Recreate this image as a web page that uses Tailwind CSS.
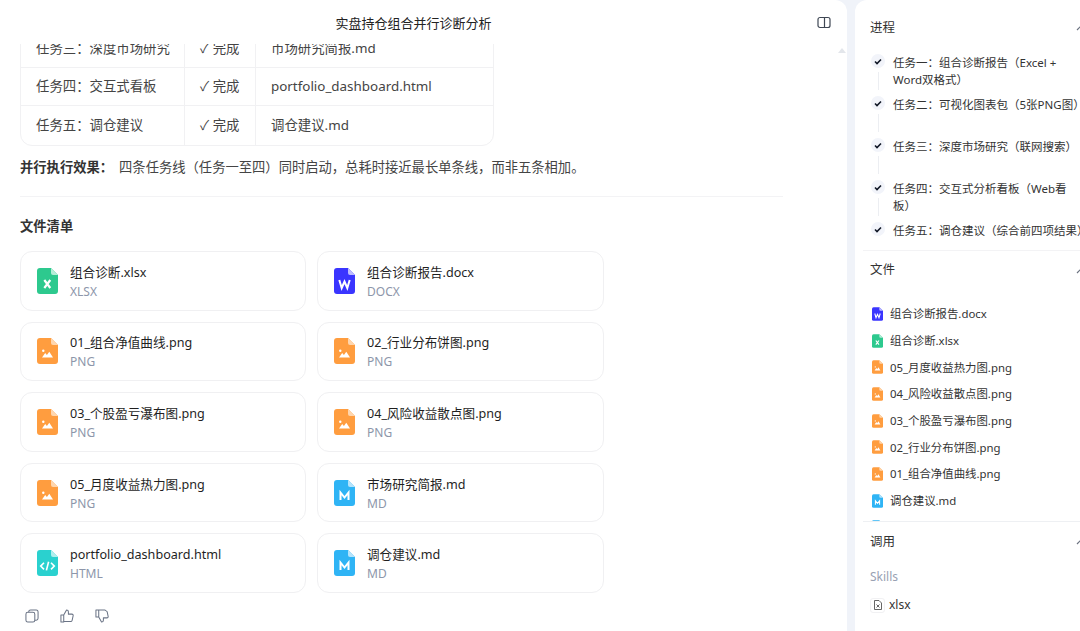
<!DOCTYPE html>
<html lang="zh-CN">
<head>
  <meta charset="UTF-8">
  <title>实盘持仓组合并行诊断分析</title>
  <script src="https://cdn.jsdelivr.net/npm/@tailwindcss/browser@4"></script>
</head>
<body class="bg-[#f0f3f9] h-[631px] w-[1080px] overflow-hidden font-['Noto_Sans','Noto_Sans_CJK_SC',sans-serif] text-[#333]">

  <!-- shared file icons -->
  <svg class="hidden">
    <symbol id="ic-xlsx" viewBox="0 0 21 26">
      <path fill="#2dc98e" d="M3 0H14L21 7V23a3 3 0 0 1-3 3H3a3 3 0 0 1-3-3V3a3 3 0 0 1 3-3z"/>
      <path fill="#b5eed8" d="M14 0L21 7H16a2 2 0 0 1-2-2z"/>
      <path fill="none" stroke="#fff" stroke-width="2.200" d="M7.300 12l6 8M13.300 12l-6 8"/>
    </symbol>
    <symbol id="ic-docx" viewBox="0 0 21 26">
      <path fill="#3a35ff" d="M3 0H14L21 7V23a3 3 0 0 1-3 3H3a3 3 0 0 1-3-3V3a3 3 0 0 1 3-3z"/>
      <path fill="#bdbcff" d="M14 0L21 7H16a2 2 0 0 1-2-2z"/>
      <path fill="none" stroke="#fff" stroke-width="2" d="M5.300 12l2.400 8 2.800-6.500 2.800 6.500 2.400-8"/>
    </symbol>
    <symbol id="ic-png" viewBox="0 0 21 26">
      <path fill="#ff9d3f" d="M3 0H14L21 7V23a3 3 0 0 1-3 3H3a3 3 0 0 1-3-3V3a3 3 0 0 1 3-3z"/>
      <path fill="#ffd6ae" d="M14 0L21 7H16a2 2 0 0 1-2-2z"/>
      <circle cx="6.300" cy="12.800" r="1.200" fill="#fff"/>
      <path fill="#fff" d="M5 19.500l3.200-4.400 1.700 2 2.400-3.400 3.700 5.800z"/>
    </symbol>
    <symbol id="ic-md" viewBox="0 0 21 26">
      <path fill="#2fb4f5" d="M3 0H14L21 7V23a3 3 0 0 1-3 3H3a3 3 0 0 1-3-3V3a3 3 0 0 1 3-3z"/>
      <path fill="#b5e4fc" d="M14 0L21 7H16a2 2 0 0 1-2-2z"/>
      <path fill="none" stroke="#fff" stroke-width="2" d="M6.500 20v-7.500l4 5 4-5V20"/>
    </symbol>
    <symbol id="ic-html" viewBox="0 0 21 26">
      <path fill="#2ad1cf" d="M3 0H14L21 7V23a3 3 0 0 1-3 3H3a3 3 0 0 1-3-3V3a3 3 0 0 1 3-3z"/>
      <path fill="#b0efee" d="M14 0L21 7H16a2 2 0 0 1-2-2z"/>
      <path fill="none" stroke="#fff" stroke-width="1.600" d="M7 12.800l-3.300 3.300 3.300 3.300M14 12.800l3.300 3.300-3.300 3.300M11.600 11.800l-2.200 8.600"/>
    </symbol>
  </svg>

  <div class="flex h-full w-[1100px] gap-2">

    <!-- Main panel -->
    <main class="relative w-[847px] shrink-0 h-full bg-white rounded-tr-xl flex flex-col overflow-hidden">
      <header class="h-[44px] shrink-0 flex items-center justify-center relative pt-[3px] pr-[20px]">
        <h1 class="text-[13px] text-[#222]">实盘持仓组合并行诊断分析</h1>
        <svg class="absolute left-[817px] top-[16px]" width="14" height="13" viewBox="0 0 14 13" fill="none" stroke="#3f4754" stroke-width="1.200">
          <rect x="1" y="1.500" width="12" height="10" rx="2"/>
          <path d="M7.500 1.500v10"/>
        </svg>
      </header>
      <div class="absolute left-[838px] top-[48px] w-0 h-0 border-x-[4px] border-x-transparent border-b-[5px] border-b-[#e3e6eb]"></div>

      <div class="flex-1 overflow-hidden px-5">
        <div class="w-[474px] -mt-[15px] border border-[#f1f1f3] rounded-b-xl text-[13.400px] text-[#444]">
          <div class="flex h-[38px] items-center border-b border-[#f1f1f3]">
            <div class="w-[164px] h-full flex items-center pl-[15px] border-r border-[#f1f1f3]">任务三：深度市场研究</div>
            <div class="w-[71px] h-full flex items-center pl-[15px] border-r border-[#f1f1f3]">✓ 完成</div>
            <div class="pl-[15px]">市场研究简报.md</div>
          </div>
          <div class="flex h-[38px] items-center border-b border-[#f1f1f3]">
            <div class="w-[164px] h-full flex items-center pl-[15px] border-r border-[#f1f1f3]">任务四：交互式看板</div>
            <div class="w-[71px] h-full flex items-center pl-[15px] border-r border-[#f1f1f3]">✓ 完成</div>
            <div class="pl-[15px]">portfolio_dashboard.html</div>
          </div>
          <div class="flex h-[39px] items-center">
            <div class="w-[164px] h-full flex items-center pl-[15px] border-r border-[#f1f1f3]">任务五：调仓建议</div>
            <div class="w-[71px] h-full flex items-center pl-[15px] border-r border-[#f1f1f3]">✓ 完成</div>
            <div class="pl-[15px]">调仓建议.md</div>
          </div>
        </div>

        <p class="mt-[11px] h-[20px] leading-[20px] text-[13.300px] text-[#444]"><b class="font-bold text-[#333] mr-[6px]">并行执行效果：</b>四条任务线（任务一至四）同时启动，总耗时接近最长单条线，而非五条相加。</p>
        <div class="mt-[19px] w-[763px] border-t border-[#f3f3f5]"></div>
        <h2 class="mt-[19px] h-[20px] leading-[20px] text-[13.300px] font-bold text-[#333]">文件清单</h2>

        <div class="mt-[15px] grid grid-cols-[286px_287px] gap-x-[11px] gap-y-[11px] w-[584px]">
          <div class="h-[59.600px] bg-white border border-[#f0f0f2] rounded-xl flex items-center pl-[16px] gap-[12px]">
            <svg class="w-[21px] h-[26px] shrink-0"><use href="#ic-xlsx"/></svg>
            <div class="mt-[2px]"><div class="text-[12.600px] leading-[19px] text-[#1f1f1f]">组合诊断.xlsx</div><div class="text-[12px] leading-[19px] text-[#8d96aa]">XLSX</div></div>
          </div>
          <div class="h-[59.600px] bg-white border border-[#f0f0f2] rounded-xl flex items-center pl-[16px] gap-[12px]">
            <svg class="w-[21px] h-[26px] shrink-0"><use href="#ic-docx"/></svg>
            <div class="mt-[2px]"><div class="text-[12.600px] leading-[19px] text-[#1f1f1f]">组合诊断报告.docx</div><div class="text-[12px] leading-[19px] text-[#8d96aa]">DOCX</div></div>
          </div>
          <div class="h-[59.600px] bg-white border border-[#f0f0f2] rounded-xl flex items-center pl-[16px] gap-[12px]">
            <svg class="w-[21px] h-[26px] shrink-0"><use href="#ic-png"/></svg>
            <div class="mt-[2px]"><div class="text-[12.600px] leading-[19px] text-[#1f1f1f]">01_组合净值曲线.png</div><div class="text-[12px] leading-[19px] text-[#8d96aa]">PNG</div></div>
          </div>
          <div class="h-[59.600px] bg-white border border-[#f0f0f2] rounded-xl flex items-center pl-[16px] gap-[12px]">
            <svg class="w-[21px] h-[26px] shrink-0"><use href="#ic-png"/></svg>
            <div class="mt-[2px]"><div class="text-[12.600px] leading-[19px] text-[#1f1f1f]">02_行业分布饼图.png</div><div class="text-[12px] leading-[19px] text-[#8d96aa]">PNG</div></div>
          </div>
          <div class="h-[59.600px] bg-white border border-[#f0f0f2] rounded-xl flex items-center pl-[16px] gap-[12px]">
            <svg class="w-[21px] h-[26px] shrink-0"><use href="#ic-png"/></svg>
            <div class="mt-[2px]"><div class="text-[12.600px] leading-[19px] text-[#1f1f1f]">03_个股盈亏瀑布图.png</div><div class="text-[12px] leading-[19px] text-[#8d96aa]">PNG</div></div>
          </div>
          <div class="h-[59.600px] bg-white border border-[#f0f0f2] rounded-xl flex items-center pl-[16px] gap-[12px]">
            <svg class="w-[21px] h-[26px] shrink-0"><use href="#ic-png"/></svg>
            <div class="mt-[2px]"><div class="text-[12.600px] leading-[19px] text-[#1f1f1f]">04_风险收益散点图.png</div><div class="text-[12px] leading-[19px] text-[#8d96aa]">PNG</div></div>
          </div>
          <div class="h-[59.600px] bg-white border border-[#f0f0f2] rounded-xl flex items-center pl-[16px] gap-[12px]">
            <svg class="w-[21px] h-[26px] shrink-0"><use href="#ic-png"/></svg>
            <div class="mt-[2px]"><div class="text-[12.600px] leading-[19px] text-[#1f1f1f]">05_月度收益热力图.png</div><div class="text-[12px] leading-[19px] text-[#8d96aa]">PNG</div></div>
          </div>
          <div class="h-[59.600px] bg-white border border-[#f0f0f2] rounded-xl flex items-center pl-[16px] gap-[12px]">
            <svg class="w-[21px] h-[26px] shrink-0"><use href="#ic-md"/></svg>
            <div class="mt-[2px]"><div class="text-[12.600px] leading-[19px] text-[#1f1f1f]">市场研究简报.md</div><div class="text-[12px] leading-[19px] text-[#8d96aa]">MD</div></div>
          </div>
          <div class="h-[59.600px] bg-white border border-[#f0f0f2] rounded-xl flex items-center pl-[16px] gap-[12px]">
            <svg class="w-[21px] h-[26px] shrink-0"><use href="#ic-html"/></svg>
            <div class="mt-[2px]"><div class="text-[12.600px] leading-[19px] text-[#1f1f1f]">portfolio_dashboard.html</div><div class="text-[12px] leading-[19px] text-[#8d96aa]">HTML</div></div>
          </div>
          <div class="h-[59.600px] bg-white border border-[#f0f0f2] rounded-xl flex items-center pl-[16px] gap-[12px]">
            <svg class="w-[21px] h-[26px] shrink-0"><use href="#ic-md"/></svg>
            <div class="mt-[2px]"><div class="text-[12.600px] leading-[19px] text-[#1f1f1f]">调仓建议.md</div><div class="text-[12px] leading-[19px] text-[#8d96aa]">MD</div></div>
          </div>
        </div>

        <!-- Message actions -->
        <div class="mt-[16px] ml-[5px] flex gap-[21px] text-[#6b7486]">
          <svg width="14" height="14" viewBox="0 0 15 15" fill="none" stroke="currentColor" stroke-width="1.100">
            <rect x="1" y="3.500" width="9.500" height="10.500" rx="2"/>
            <path d="M4 3.500V3a2 2 0 0 1 2-2h6a2 2 0 0 1 2 2v7a2 2 0 0 1-2 2h-1.500"/>
          </svg>
          <svg width="14" height="14" viewBox="0 0 15 15" fill="none" stroke="currentColor" stroke-width="1.100" stroke-linejoin="round">
            <path d="M1 6.500h3v7.500H1zM4 6.500l3-5.500c1.300 0 2 .8 2 2v2.500h3.800c.9 0 1.500.8 1.300 1.600l-1.100 5c-.2.800-.8 1.400-1.600 1.400H4"/>
          </svg>
          <svg width="14" height="14" viewBox="0 0 15 15" fill="none" stroke="currentColor" stroke-width="1.100" stroke-linejoin="round">
            <path d="M1 1h3v7.500H1zM4 8.500l3 5.500c1.300 0 2-.8 2-2V9.500h3.800c.9 0 1.500-.8 1.300-1.600l-1.100-5C11.800 2.100 11.200 1 10.400 1H4"/>
          </svg>
        </div>
      </div>
    </main>

    <!-- Right panel -->
    <aside class="w-[240px] shrink-0 h-full bg-white rounded-tl-xl pl-2 overflow-hidden flex flex-col">

      <section class="h-[251px] shrink-0 border-b border-[#f3f3f5]">
        <div class="h-[54px] pt-[2px] flex items-center justify-between pl-[7px] pr-[9px] text-[12.500px] text-[#333]">
          <span>进程</span>
          <svg width="10" height="6" viewBox="0 0 10 6" fill="none" stroke="#6b7280" stroke-width="1.200"><path d="M1 5l4-4 4 4"/></svg>
        </div>
        <ul class="text-[11.500px] leading-[17px] text-[#333]">
          <li class="flex h-[42px]">
            <div class="w-[29px] ml-[1px] shrink-0 flex flex-col items-start">
              <span class="ml-[7px] flex items-center justify-center w-[14px] h-[14px] rounded-full bg-[#f2f4fa]"><svg width="8" height="7" viewBox="0 0 8 7" fill="none" stroke="#111827" stroke-width="1.600"><path d="M1 3.500l2 2 4-4"/></svg></span>
              <span class="ml-[14px] mt-[4px] w-px h-[18px] bg-[#eceef2]"></span>
            </div>
            <p class="w-[190px]">任务一：组合诊断报告（Excel + Word双格式）</p>
          </li>
          <li class="flex h-[42px]">
            <div class="w-[29px] ml-[1px] shrink-0 flex flex-col items-start">
              <span class="ml-[7px] flex items-center justify-center w-[14px] h-[14px] rounded-full bg-[#f2f4fa]"><svg width="8" height="7" viewBox="0 0 8 7" fill="none" stroke="#111827" stroke-width="1.600"><path d="M1 3.500l2 2 4-4"/></svg></span>
              <span class="ml-[14px] mt-[4px] w-px h-[18px] bg-[#eceef2]"></span>
            </div>
            <p class="w-[190px]">任务二：可视化图表包（5张PNG图）</p>
          </li>
          <li class="flex h-[42px]">
            <div class="w-[29px] ml-[1px] shrink-0 flex flex-col items-start">
              <span class="ml-[7px] flex items-center justify-center w-[14px] h-[14px] rounded-full bg-[#f2f4fa]"><svg width="8" height="7" viewBox="0 0 8 7" fill="none" stroke="#111827" stroke-width="1.600"><path d="M1 3.500l2 2 4-4"/></svg></span>
              <span class="ml-[14px] mt-[4px] w-px h-[18px] bg-[#eceef2]"></span>
            </div>
            <p class="w-[190px]">任务三：深度市场研究（联网搜索）</p>
          </li>
          <li class="flex h-[42px]">
            <div class="w-[29px] ml-[1px] shrink-0 flex flex-col items-start">
              <span class="ml-[7px] flex items-center justify-center w-[14px] h-[14px] rounded-full bg-[#f2f4fa]"><svg width="8" height="7" viewBox="0 0 8 7" fill="none" stroke="#111827" stroke-width="1.600"><path d="M1 3.500l2 2 4-4"/></svg></span>
              <span class="ml-[14px] mt-[4px] w-px h-[18px] bg-[#eceef2]"></span>
            </div>
            <p class="w-[190px]">任务四：交互式分析看板（Web看板）</p>
          </li>
          <li class="flex h-[30px]">
            <div class="w-[29px] ml-[1px] shrink-0">
              <span class="ml-[7px] flex items-center justify-center w-[14px] h-[14px] rounded-full bg-[#f2f4fa]"><svg width="8" height="7" viewBox="0 0 8 7" fill="none" stroke="#111827" stroke-width="1.600"><path d="M1 3.500l2 2 4-4"/></svg></span>
            </div>
            <p class="w-[200px] whitespace-nowrap">任务五：调仓建议（综合前四项结果）</p>
          </li>
        </ul>
      </section>

      <section class="h-[271px] shrink-0 border-b border-[#eef0f3] overflow-hidden">
        <div class="h-[39px] flex items-center justify-between pl-[7px] pr-[9px] text-[12.500px] text-[#333]">
          <span>文件</span>
          <svg width="10" height="6" viewBox="0 0 10 6" fill="none" stroke="#6b7280" stroke-width="1.200"><path d="M1 5l4-4 4 4"/></svg>
        </div>
        <ul class="mt-[10.500px] pl-[9px] text-[11.400px] text-[#333]">
          <li class="h-[26.700px] flex items-center gap-[7px]"><svg class="w-[11px] h-[14px] shrink-0"><use href="#ic-docx"/></svg>组合诊断报告.docx</li>
          <li class="h-[26.700px] flex items-center gap-[7px]"><svg class="w-[11px] h-[14px] shrink-0"><use href="#ic-xlsx"/></svg>组合诊断.xlsx</li>
          <li class="h-[26.700px] flex items-center gap-[7px]"><svg class="w-[11px] h-[14px] shrink-0"><use href="#ic-png"/></svg>05_月度收益热力图.png</li>
          <li class="h-[26.700px] flex items-center gap-[7px]"><svg class="w-[11px] h-[14px] shrink-0"><use href="#ic-png"/></svg>04_风险收益散点图.png</li>
          <li class="h-[26.700px] flex items-center gap-[7px]"><svg class="w-[11px] h-[14px] shrink-0"><use href="#ic-png"/></svg>03_个股盈亏瀑布图.png</li>
          <li class="h-[26.700px] flex items-center gap-[7px]"><svg class="w-[11px] h-[14px] shrink-0"><use href="#ic-png"/></svg>02_行业分布饼图.png</li>
          <li class="h-[26.700px] flex items-center gap-[7px]"><svg class="w-[11px] h-[14px] shrink-0"><use href="#ic-png"/></svg>01_组合净值曲线.png</li>
          <li class="h-[26.700px] flex items-center gap-[7px]"><svg class="w-[11px] h-[14px] shrink-0"><use href="#ic-md"/></svg>调仓建议.md</li>
          <li class="h-[26.700px] flex items-center gap-[7px]"><svg class="w-[11px] h-[14px] shrink-0"><use href="#ic-md"/></svg></li>
        </ul>
      </section>

      <section>
        <div class="h-[40px] flex items-center justify-between pl-[7px] pr-[9px] text-[12.500px] text-[#333]">
          <span>调用</span>
          <svg width="10" height="6" viewBox="0 0 10 6" fill="none" stroke="#6b7280" stroke-width="1.200"><path d="M1 5l4-4 4 4"/></svg>
        </div>
        <div class="mt-[6px] pl-[7px] text-[12px] leading-[18px] text-[#98a1b3]">Skills</div>
        <div class="mt-[10px] pl-[7px] flex items-center gap-[4px] text-[12px] text-[#333]">
          <span class="w-[15px] h-[15px] border border-[#f1f1f3] rounded-[3px] flex items-center justify-center">
            <svg width="8" height="10" viewBox="0 0 8 10" fill="none" stroke="#555" stroke-width="0.900"><path d="M1 .5h4L7.500 3v6.500H.5v-9z"/><path d="M2.500 4.500l3 3M5.500 4.500l-3 3"/></svg>
          </span>
          xlsx
        </div>
      </section>
    </aside>
  </div>
</body>
</html>
